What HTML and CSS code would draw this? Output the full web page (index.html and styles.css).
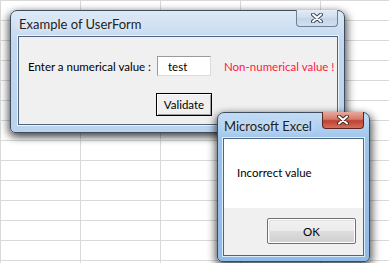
FILE: index.html
```html
<!DOCTYPE html>
<html lang="en">
<head>
    <meta charset="UTF-8">
    <title>Example of UserForm</title>
    <link rel="stylesheet" href="styles.css">
</head>
<body>
    <div class="sheet">
        <!-- UserForm window (inactive) -->
        <div class="window userform">
            <div class="titlebar">
                <span class="title">Example of UserForm</span>
                <button class="close">
                    <svg width="12" height="10" viewBox="0 0 12 10">
                        <path d="M2 1.5 L10 8.5 M10 1.5 L2 8.5" stroke="#3b4756" stroke-width="4" stroke-linecap="round"/>
                        <path d="M2 1.5 L10 8.5 M10 1.5 L2 8.5" stroke="#fff" stroke-width="2" stroke-linecap="round"/>
                    </svg>
                </button>
            </div>
            <div class="client form-client">
                <div class="form-row">
                    <label for="value">Enter a numerical value :</label>
                    <input type="text" id="value" value="test">
                    <span class="warn">Non-numerical value !</span>
                </div>
                <div class="form-actions">
                    <button class="btn default">Validate</button>
                </div>
            </div>
        </div>

        <!-- MsgBox (active) -->
        <div class="window msgbox">
            <div class="titlebar">
                <span class="title">Microsoft Excel</span>
                <button class="close red">
                    <svg width="12" height="10" viewBox="0 0 12 10">
                        <path d="M2 1.5 L10 8.5 M10 1.5 L2 8.5" stroke="#4a2a26" stroke-width="4" stroke-linecap="round"/>
                        <path d="M2 1.5 L10 8.5 M10 1.5 L2 8.5" stroke="#fff" stroke-width="2" stroke-linecap="round"/>
                    </svg>
                </button>
            </div>
            <div class="client msg-client">
                <div class="msg-text">Incorrect value</div>
                <div class="msg-actions">
                    <button class="btn ok">OK</button>
                </div>
            </div>
        </div>
    </div>
</body>
</html>
```

FILE: styles.css
```css
body {
    margin: 0;
    font-family: Lato, "Noto Sans", sans-serif;
    font-size: 11.5px;
    color: #000;
}
.sheet {
    position: relative;
    width: 389px;
    height: 263px;
    overflow: hidden;
    background-color: #fff;
    background-image:
        linear-gradient(#d9d9d9 1px, transparent 1px),
        linear-gradient(90deg, #d9d9d9 1px, transparent 1px);
    background-size: 100% 20px, 80px 100%;
}
.window {
    position: absolute;
    box-sizing: border-box;
    display: flex;
    flex-direction: column;
    padding: 0 6px 7px 7px;
    border: 1px solid #3d4e63;
    border-radius: 7px 7px 5px 5px;
    box-shadow: -2px 3px 8px rgba(0,0,0,0.55), 3px 3px 8px rgba(0,0,0,0.45);
}
.userform {
    left: 10px;
    top: 10px;
    width: 335px;
    height: 123px;
    background: linear-gradient(#dde9f6, #c3d8ef 30px, #bcd3ec);
}
.msgbox {
    left: 217px;
    top: 112px;
    width: 153px;
    height: 150px;
    padding: 0 5px 5px 5px;
    background: linear-gradient(#c3dcf5, #9cc4ec 28px, #8fbbe8);
}
.titlebar {
    height: 25px;
    display: flex;
    align-items: center;
    position: relative;
    padding-left: 1px;
}
.title {
    font-size: 13px;
    color: #222;
    white-space: nowrap;
    text-shadow: 0 0 6px rgba(255,255,255,0.9);
}
.close {
    position: absolute;
    top: -1px;
    right: 0;
    width: 42px;
    height: 17px;
    padding: 0;
    display: flex;
    align-items: center;
    justify-content: center;
    border: 1px solid #6f8196;
    border-top: none;
    border-radius: 0 0 4px 4px;
    background: linear-gradient(#e3ecf6, #cfdcec 50%, #c3d4e8 51%, #d2e0ef);
}
.close.red {
    border-color: #5c2520;
    background: linear-gradient(#e6a99c, #d47a6a 45%, #c0402f 55%, #d2705c);
}
.client {
    flex: 1;
    box-sizing: border-box;
    border: 1px solid #4d6580;
    box-shadow: 0 0 0 1px rgba(255,255,255,0.7);
}
.form-client {
    background-color: #f0f0f0;
    padding: 19px 0 0 9px;
}
.form-row {
    display: flex;
    align-items: center;
    height: 20px;
    white-space: nowrap;
}
.form-row label {
    width: 129px;
    flex-shrink: 0;
}
.form-row input {
    box-sizing: border-box;
    flex-shrink: 0;
    width: 54px;
    height: 20px;
    margin: 0;
    padding: 0 0 0 10px;
    font-family: Lato, "Noto Sans", sans-serif;
    font-size: 11.5px;
    border: 1px solid;
    border-color: #9a9a9a #dcdcdc #dcdcdc #9a9a9a;
    background-color: #fff;
    outline: none;
}
.warn {
    margin-left: 13px;
    color: #ff1744;
}
.form-actions {
    padding: 17px 0 0 128px;
}
.btn {
    box-sizing: border-box;
    font-family: Lato, "Noto Sans", sans-serif;
    font-size: 11.5px;
    color: #000;
    padding: 0;
    background-color: #f0f0f0;
    cursor: pointer;
}
.btn.default {
    width: 56px;
    height: 23px;
    border: 1px solid #000;
    box-shadow: inset 1px 1px 0 #fff, inset -1px -1px 0 #a0a0a0;
}
.msg-client {
    display: flex;
    flex-direction: column;
    background-color: #f0f0f0;
}
.msg-text {
    height: 69px;
    background-color: #fff;
    padding: 27px 0 0 13px;
    box-sizing: border-box;
}
.msg-actions {
    flex: 1;
    display: flex;
    justify-content: flex-end;
    padding: 10px 7px 0 0;
}
.btn.ok {
    width: 89px;
    height: 26px;
    border: 1px solid #707070;
    box-shadow: inset 1px 1px 0 #fff, inset -1px -1px 0 #fff, inset 2px 2px 0 #e3e3e3;
    background: linear-gradient(#f2f2f2, #ebebeb 50%, #dddddd 51%, #cfcfcf);
    border-radius: 2px;
}
```
